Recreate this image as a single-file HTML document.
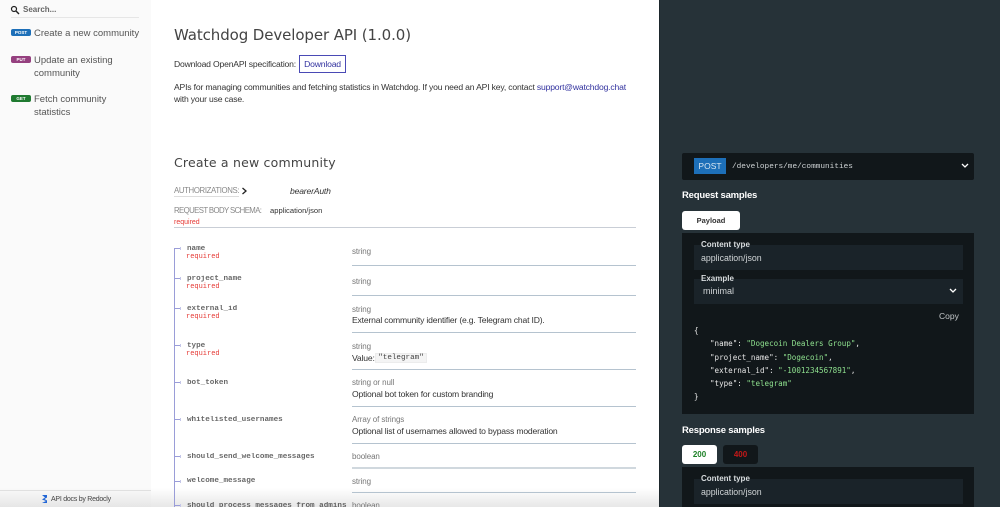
<!DOCTYPE html>
<html><head><meta charset="utf-8"><style>
html,body{margin:0;padding:0;width:1000px;height:507px;overflow:hidden;background:#fff}
body{position:relative;font-family:"Liberation Sans",sans-serif;color:#333}
div,span.a,a{position:absolute;white-space:nowrap}
.m{font-family:"Liberation Mono",monospace}
.h{font-family:"DejaVu Sans",sans-serif;font-weight:400;color:#444}
.p{font-size:8.600px;line-height:12px;letter-spacing:-.18px}
.t{font-size:8px;line-height:10px;color:#777;left:352px;letter-spacing:-.1px}
.d{font-size:8.600px;line-height:12px;color:#333;left:352px;letter-spacing:-.18px}
.r{font-size:7px;line-height:9px;color:#e53935;left:186px}
.n{font-size:7.600px;line-height:10px;color:#333;left:187px;font-weight:bold;opacity:.75}
.l{left:352px;width:284px;height:1px;background:#b5c3cf}
.c{left:174px;width:6px;height:1px;background:#9a9dd8}
.c:after{content:"";position:absolute;left:6px;top:-1px;width:1px;height:3px;background:#c4c6e8}
.b{left:11px;width:20px;height:7px;border-radius:2px;color:#fff;font-size:4.500px;line-height:7px;font-weight:bold;text-align:center}
.s{left:34px;font-size:9.500px;line-height:12.500px;color:#555}
.g{color:#8ee08e}
.ss{font-size:9.500px;line-height:13px;font-weight:bold;color:#fff;left:682px;letter-spacing:-.2px}
.in{display:inline-block;margin-left:16px}
</style></head><body>
<div style="left:0;top:0;width:151px;height:507px;background:#fafafa"></div>
<div style="left:0;top:488px;width:659px;height:19px;background:linear-gradient(to bottom,rgba(225,225,225,0),rgba(225,225,225,.8))"></div>
<svg style="position:absolute;left:10px;top:5px" width="10" height="10" viewBox="0 0 10 10"><circle cx="4" cy="4" r="2.500" fill="none" stroke="#222" stroke-width="1.200"/><path d="M6 6l3 3" stroke="#222" stroke-width="1.400"/></svg>
<div style="left:23px;top:4px;font-size:8px;line-height:11px;font-weight:bold;color:#666">Search...</div>
<div style="left:11px;top:17px;width:128px;height:1px;background:#e6e6e6"></div>
<div class="b" style="top:29px;background:#1d6fb8">POST</div>
<div class="s" style="top:28px">Create a new community</div>
<div class="b" style="top:56px;background:#95407f">PUT</div>
<div class="s" style="top:55px">Update an existing<br>community</div>
<div class="b" style="top:95px;background:#1f7a30">GET</div>
<div class="s" style="top:94px">Fetch community<br>statistics</div>
<div style="left:0;top:490px;width:151px;height:1px;background:#e0e0e0"></div>
<svg style="position:absolute;left:41px;top:495px" width="7" height="9" viewBox="0 0 7 9"><path d="M1 0h5v2.500L3.500 4 6 5.500V8H1l4-2L1 4.500 4 2.500z" fill="#2166d6"/></svg>
<div style="left:51px;top:494px;font-size:7px;line-height:11px;color:#444;letter-spacing:-.25px">API docs by Redocly</div>

<div class="h" style="left:174px;top:24px;font-size:15px;line-height:22px;letter-spacing:-.1px">Watchdog Developer API (1.0.0)</div>
<div class="p" style="left:174px;top:58px">Download OpenAPI specification:</div>
<div class="p" style="left:299px;top:55px;width:45px;height:16px;border:1px solid #4a4ab5;color:#32329f;line-height:16px;text-align:center">Download</div>
<div class="p" style="left:174px;top:81px">APIs for managing communities and fetching statistics in Watchdog. If you need an API key, contact <span style="color:#32329f">support@watchdog.chat</span></div>
<div class="p" style="left:174px;top:93px">with your use case.</div>

<div class="h" style="left:174px;top:154px;font-size:12.500px;line-height:18px;letter-spacing:.2px">Create a new community</div>
<div style="left:174px;top:185px;font-size:7.800px;line-height:12px;color:#888;letter-spacing:-.35px">AUTHORIZATIONS:</div>
<div style="left:174px;top:196px;width:65px;height:1px;background:#ddd"></div>
<svg style="position:absolute;left:241px;top:187px" width="7" height="8" viewBox="0 0 7 8"><path d="M1.500 1l3.500 3-3.500 3" fill="none" stroke="#222" stroke-width="1.300"/></svg>
<div class="p" style="left:290px;top:185px;font-style:italic">bearerAuth</div>
<div style="left:174px;top:205px;font-size:7.800px;line-height:12px;color:#888;letter-spacing:-.6px">REQUEST BODY SCHEMA:</div>
<div style="left:270px;top:205px;font-size:7.600px;line-height:12px;color:#333">application/json</div>
<div style="left:174px;top:217px;font-size:7px;line-height:11px;color:#e53935">required</div>
<div style="left:174px;top:227px;width:462px;height:1px;background:#c9ced6"></div>

<div style="left:174px;top:248px;width:1px;height:259px;background:#9a9dd8"></div>
<div class="c" style="top:248px"></div><div class="c" style="top:278px"></div><div class="c" style="top:308px"></div><div class="c" style="top:345px"></div><div class="c" style="top:382px"></div><div class="c" style="top:419px"></div><div class="c" style="top:456px"></div><div class="c" style="top:481px"></div><div class="c" style="top:505px"></div>

<div class="n m" style="top:244px">name</div><div class="r m" style="top:253px">required</div>
<div class="n m" style="top:274px">project_name</div><div class="r m" style="top:283px">required</div>
<div class="n m" style="top:304px">external_id</div><div class="r m" style="top:313px">required</div>
<div class="n m" style="top:341px">type</div><div class="r m" style="top:350px">required</div>
<div class="n m" style="top:378px">bot_token</div>
<div class="n m" style="top:415px">whitelisted_usernames</div>
<div class="n m" style="top:452px">should_send_welcome_messages</div>
<div class="n m" style="top:476px">welcome_message</div>
<div class="n m" style="top:501px">should_process_messages_from_admins</div>

<div class="t" style="top:247px">string</div><div class="l" style="top:265px"></div>
<div class="t" style="top:277px">string</div><div class="l" style="top:295px"></div>
<div class="t" style="top:305px">string</div><div class="d" style="top:314px">External community identifier (e.g. Telegram chat ID).</div><div class="l" style="top:332px"></div>
<div class="t" style="top:342px">string</div><div class="d" style="top:352px">Value:</div>
<div class="m" style="left:375px;top:353px;width:52px;height:10px;background:#f4f4f4;border:1px solid #ececec;box-sizing:border-box;font-size:7.600px;line-height:8px;text-align:center;color:#444">"telegram"</div>
<div class="l" style="top:369px"></div>
<div class="t" style="top:378px">string or null</div><div class="d" style="top:388px">Optional bot token for custom branding</div><div class="l" style="top:406px"></div>
<div class="t" style="top:415px">Array of strings</div><div class="d" style="top:425px">Optional list of usernames allowed to bypass moderation</div><div class="l" style="top:443px"></div>
<div class="t" style="top:452px">boolean</div><div class="l" style="top:467px;height:2px;background:#d0d8de"></div>
<div class="t" style="top:477px">string</div><div class="l" style="top:492px"></div>
<div class="t" style="top:501px">boolean</div>

<div style="left:659px;top:0;width:341px;height:507px;background:#263238"></div>
<div style="left:659px;top:0;width:1px;height:507px;background:#1d272c"></div>
<div style="left:682px;top:153px;width:292px;height:27px;background:#11171a;border-radius:2px"></div>
<div style="left:694px;top:158px;width:32px;height:16px;background:#1d6fb8;color:#d8e6f2;font-size:8.500px;line-height:16px;text-align:center">POST</div>
<div class="m" style="left:732px;top:162px;font-size:7.750px;line-height:11px;color:#d0d4d6">/developers/me/communities</div>
<svg style="position:absolute;left:960px;top:162px" width="10" height="8" viewBox="0 0 10 8"><path d="M2 2l3 3 3-3" fill="none" stroke="#fff" stroke-width="1.300"/></svg>
<div class="ss" style="top:189px">Request samples</div>
<div style="left:682px;top:211px;width:58px;height:19px;background:#fff;border-radius:3px;color:#333;font-size:7.500px;font-weight:bold;line-height:19px;text-align:center">Payload</div>
<div style="left:682px;top:233px;width:292px;height:181px;background:#11171a"></div>
<div style="left:694px;top:245px;width:269px;height:25px;background:#1a2329"></div>
<div style="left:701px;top:239px;font-size:8px;line-height:11px;font-weight:bold;color:#d8dcde">Content type</div>
<div style="left:701px;top:252px;font-size:8.800px;line-height:12px;color:#d0d4d6">application/json</div>
<div style="left:694px;top:279px;width:269px;height:25px;background:#1a2329"></div>
<div style="left:701px;top:273px;font-size:8px;line-height:11px;font-weight:bold;color:#d8dcde">Example</div>
<div style="left:703px;top:285px;font-size:9px;line-height:12px;color:#d0d4d6">minimal</div>
<svg style="position:absolute;left:948px;top:287px" width="10" height="8" viewBox="0 0 10 8"><path d="M2 2l3 3 3-3" fill="none" stroke="#fff" stroke-width="1.300"/></svg>
<div style="left:939px;top:310px;font-size:8.500px;line-height:12px;color:#c4c8ca">Copy</div>
<div style="left:694px;top:324px;font-size:7.560px;line-height:13.300px;color:#e6e6e6;white-space:pre;font-family:'DejaVu Sans Mono','Liberation Mono',monospace">{
<span class="in">"name": <span class="g">"Dogecoin Dealers Group"</span>,</span>
<span class="in">"project_name": <span class="g">"Dogecoin"</span>,</span>
<span class="in">"external_id": <span class="g">"-1001234567891"</span>,</span>
<span class="in">"type": <span class="g">"telegram"</span></span>
}</div>
<div class="ss" style="top:423.500px">Response samples</div>
<div style="left:682px;top:445px;width:35px;height:19px;background:#fff;border-radius:3px;color:#1d8127;font-size:8px;font-weight:bold;line-height:19px;text-align:center">200</div>
<div style="left:723px;top:445px;width:35px;height:19px;background:#11171a;border-radius:3px;color:#c41818;font-size:8px;font-weight:bold;line-height:19px;text-align:center">400</div>
<div style="left:682px;top:467px;width:292px;height:40px;background:#11171a"></div>
<div style="left:694px;top:479px;width:269px;height:25px;background:#1a2329"></div>
<div style="left:701px;top:473px;font-size:8px;line-height:11px;font-weight:bold;color:#d8dcde">Content type</div>
<div style="left:701px;top:486px;font-size:8.800px;line-height:12px;color:#d0d4d6">application/json</div>
</body></html>
